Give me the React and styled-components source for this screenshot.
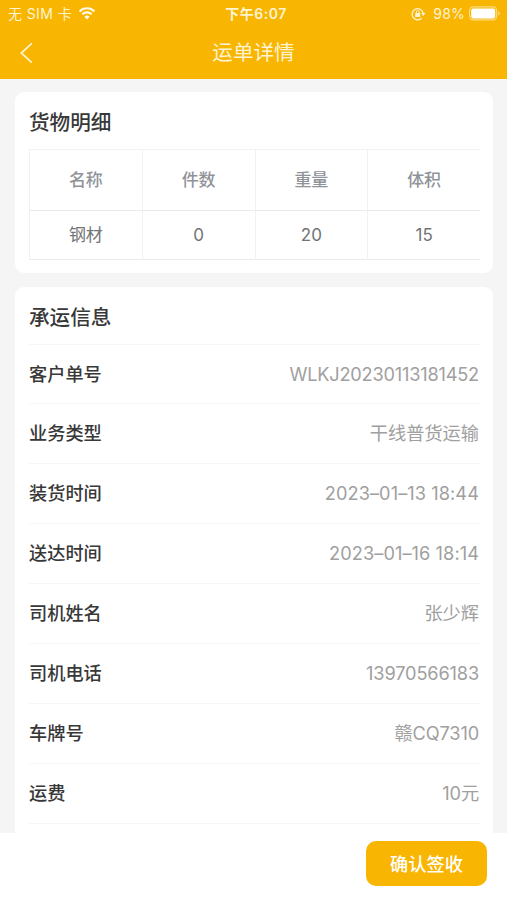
import styled, { createGlobalStyle } from 'styled-components'

const GlobalStyle = createGlobalStyle`
  * {
    box-sizing: border-box;
  }

  body {
    margin: 0;
    font-family: Inter, "Noto Sans CJK SC", sans-serif;
    background-color: #f5f5f5;
  }
`;

const Page = styled.div`
  display: flex;
  flex-direction: column;
  width: 100%;
  height: 100vh;
  overflow: hidden;
`;

const Header = styled.header`
  flex: none;
  height: 79px;
  background-color: #f8b502;
  color: #fff4d2;
`;

const StatusBar = styled.div`
  display: grid;
  grid-template-columns: 1fr auto 1fr;
  align-items: center;
  height: 27px;
  padding: 0 6px 0 8px;
  font-size: 14px;
  line-height: 27px;
`;

const Carrier = styled.div`
  display: flex;
  align-items: center;
  gap: 6px;
  letter-spacing: 0.4px;
`;

const Clock = styled.div`
  padding-left: 3px;
  font-weight: 600;
  font-size: 14px;
  letter-spacing: 0.5px;
`;

const Indicators = styled.div`
  display: flex;
  align-items: center;
  justify-content: flex-end;
`;

const Percent = styled.span`
  margin: 0 4px 0 7px;
  letter-spacing: 0.2px;
`;

const NavBar = styled.div`
  display: grid;
  grid-template-columns: 60px 1fr 60px;
  align-items: center;
  height: 52px;
`;

const BackButton = styled.button`
  display: flex;
  align-items: center;
  padding: 0 0 0 19px;
  border: none;
  background: none;
  color: inherit;
  cursor: pointer;
`;

const PageTitle = styled.h1`
  margin: 0;
  font-size: 20.6px;
  font-weight: 400;
  line-height: 52px;
  text-align: center;
`;

const Content = styled.main`
  flex: 1;
  min-height: 0;
  overflow: hidden;
  padding: 13px 14px 0 15px;
`;

const Card = styled.section`
  margin-bottom: 14px;
  padding: 0 13px 13px 14px;
  border-radius: 9px;
  background-color: #fff;
`;

const CardTitle = styled.h2`
  margin: 0;
  height: 57px;
  color: #383838;
  font-size: 20.6px;
  font-weight: 500;
  line-height: 61px;
`;

const Table = styled.div`
  display: grid;
  grid-template-columns: repeat(4, 1fr);
  border-top: 1px solid #f0f2f5;
`;

const Cell = styled.div`
  height: ${(props) => (props.$head ? '61px' : '49px')};
  border-left: 1px solid #eff1f4;
  border-bottom: 1px solid #e9ebee;
  color: ${(props) => (props.$head ? '#909399' : '#717375')};
  font-size: 17px;
  font-weight: ${(props) => (props.$head ? 500 : 400)};
  line-height: ${(props) => (props.$head ? '61px' : '49px')};
  text-align: center;
`;

const Row = styled.div`
  display: flex;
  justify-content: space-between;
  height: 60px;
  padding-right: 1px;
  border-top: 1px solid #f6f6f6;
  line-height: 59px;

  &:first-of-type {
    height: 59px;
    line-height: 58px;
  }
`;

const Label = styled.span`
  color: #383838;
  font-size: 18.2px;
  font-weight: 500;
`;

const Value = styled.span`
  color: #a0a0a0;
  font-size: 18.2px;
  letter-spacing: ${(props) => props.$spacing || '0'};
`;

const Footer = styled.footer`
  flex: none;
  display: flex;
  justify-content: flex-end;
  height: 67px;
  padding: 8px 20px 0 0;
  background-color: #fff;
`;

const ConfirmButton = styled.button`
  width: 121px;
  height: 45px;
  padding: 0;
  border: none;
  border-radius: 10px;
  background-color: #f8b502;
  color: #fff;
  font-family: inherit;
  font-size: 18.2px;
  font-weight: 500;
  line-height: 44px;
  cursor: pointer;
`;

const columns = ['名称', '件数', '重量', '体积'];
const goods = ['钢材', '0', '20', '15'];

const details = [
    { label: '客户单号', value: 'WLKJ20230113181452', spacing: '-0.2px' },
    { label: '业务类型', value: '干线普货运输' },
    { label: '装货时间', value: '2023–01–13 18:44', spacing: '0.07px' },
    { label: '送达时间', value: '2023–01–16 18:14', spacing: '0.07px' },
    { label: '司机姓名', value: '张少辉' },
    { label: '司机电话', value: '13970566183', spacing: '-0.15px' },
    { label: '车牌号', value: '赣CQ7310', spacing: '-0.15px' },
    { label: '运费', value: '10元', spacing: '-0.1px' },
    { label: '', value: '' },
];

const WifiIcon = () => (
    <svg width="18" height="13" viewBox="0 0 17 13" fill="none" stroke="#fffbea" strokeWidth="2.1">
        <path d="M1 4.4a10.6 10.6 0 0 1 15 0" />
        <path d="M3.8 7.3a6.6 6.6 0 0 1 9.4 0" />
        <path d="M8.5 12.4 5.9 9.7a3.7 3.7 0 0 1 5.2 0z" fill="#fffbea" stroke="none" />
    </svg>
);

const RotationLockIcon = () => (
    <svg width="15" height="14" viewBox="0 0 15 14" fill="none" stroke="#fff4d2" strokeWidth="1.3">
        <path d="M10.7 11.3A5.6 5.6 0 1 1 12.2 6" />
        <path d="M10.1 6h4.4l-2.2 2.9z" fill="#fff4d2" stroke="none" />
        <rect x="4.2" y="6" width="5" height="4" rx="0.6" fill="#fff4d2" stroke="none" />
        <path d="M5.3 6.4V5a1.4 1.4 0 0 1 2.8 0v1.4" strokeWidth="1" />
    </svg>
);

const BatteryIcon = () => (
    <svg width="32" height="15" viewBox="0 0 32 15">
        <rect x="0.6" y="0.9" width="27" height="13" rx="3.6" fill="none" stroke="#fcdc88" strokeWidth="1.1" />
        <rect x="2.2" y="2.6" width="24" height="9.8" rx="1.8" fill="#fff" />
        <path d="M29.2 5.3c2 .7 2 3.5 0 4.2z" fill="#fcdc88" />
    </svg>
);

const BackIcon = () => (
    <svg width="15" height="22" viewBox="0 0 15 22" fill="none" stroke="currentColor" strokeWidth="1.7">
        <path d="M12.8 1.4 2.3 11l10.5 9.6" />
    </svg>
);

const App = () => {
    return (
        <>
            <GlobalStyle />
            <Page>
                <Header>
                    <StatusBar>
                        <Carrier>
                            无 SIM 卡
                            <WifiIcon />
                        </Carrier>
                        <Clock>下午6:07</Clock>
                        <Indicators>
                            <RotationLockIcon />
                            <Percent>98%</Percent>
                            <BatteryIcon />
                        </Indicators>
                    </StatusBar>
                    <NavBar>
                        <BackButton aria-label="返回">
                            <BackIcon />
                        </BackButton>
                        <PageTitle>运单详情</PageTitle>
                    </NavBar>
                </Header>
                <Content>
                    <Card>
                        <CardTitle>货物明细</CardTitle>
                        <Table>
                            {columns.map((name) => (
                                <Cell key={name} $head>{name}</Cell>
                            ))}
                            {goods.map((item) => (
                                <Cell key={item}>{item}</Cell>
                            ))}
                        </Table>
                    </Card>
                    <Card>
                        <CardTitle>承运信息</CardTitle>
                        {details.map((item) => (
                            <Row key={item.label}>
                                <Label>{item.label}</Label>
                                <Value $spacing={item.spacing}>{item.value}</Value>
                            </Row>
                        ))}
                    </Card>
                </Content>
                <Footer>
                    <ConfirmButton>确认签收</ConfirmButton>
                </Footer>
            </Page>
        </>
    )
}

export default App
